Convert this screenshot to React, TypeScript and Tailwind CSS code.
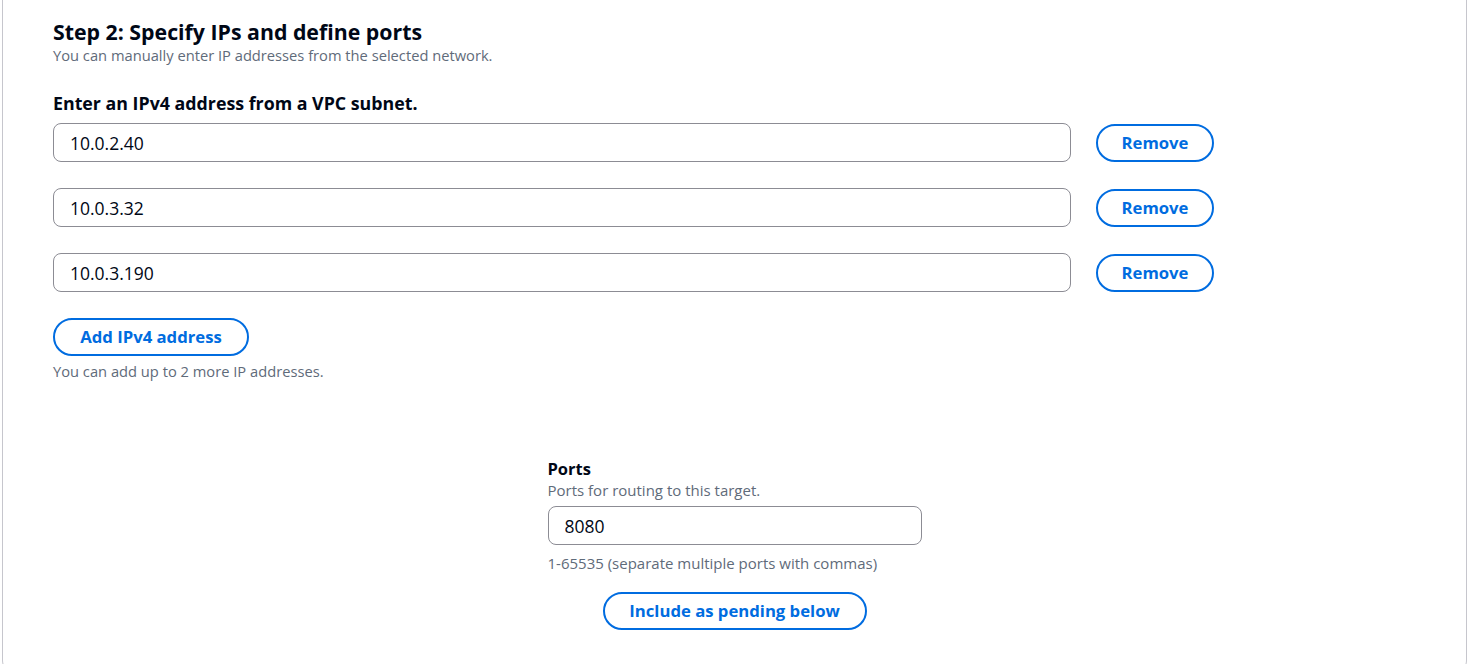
import { useState } from "react";

const FONT = { fontFamily: '"Open Sans", "Noto Sans", Arial, sans-serif' };

const PillButton = ({ label, className = "" }: { label: string; className?: string }) => (
  <button
    type="button"
    className={`h-[38px] rounded-full border-2 border-[#006ce0] bg-white text-[16.7px] font-bold text-[#006ce0] ${className}`}
  >
    {label}
  </button>
);

const TextInput = ({ value, className = "" }: { value: string; className?: string }) => {
  const [v, setV] = useState(value);
  return (
    <input
      value={v}
      onChange={(e) => setV(e.target.value)}
      className={`h-[39px] rounded-[8px] border border-[#8c8c94] bg-white px-[16px] text-[17.5px] text-[#000716] outline-none ${className}`}
    />
  );
};

export default function App() {
  const ips = ["10.0.2.40", "10.0.3.32", "10.0.3.190"];

  return (
    <div className="h-[664px] overflow-hidden bg-white" style={FONT}>
      <div className="mx-[2px] h-[676px] rounded-b-[16px] border-x border-b border-[#c6c6cd] pl-[50px] pr-[50px] pt-[18px]">
        <h2 className="text-[21.3px] font-bold leading-[27px] text-[#000716]">
          Step 2: Specify IPs and define ports
        </h2>
        <p className="text-[14.7px] leading-[20px] text-[#5f6b7a]">
          You can manually enter IP addresses from the selected network.
        </p>

        <div className="mt-[26px] text-[17.8px] font-bold leading-[24px] text-[#000716]">
          Enter an IPv4 address from a VPC subnet.
        </div>

        <div className="mt-[8px] flex flex-col gap-[26px]">
          {ips.map((ip) => (
            <div key={ip} className="flex items-center gap-[25px]">
              <TextInput value={ip} className="w-[1018px]" />
              <PillButton label="Remove" className="w-[118px]" />
            </div>
          ))}
        </div>

        <PillButton label="Add IPv4 address" className="mt-[26px] w-[196px]" />
        <p className="mt-[5px] text-[14.7px] leading-[20px] text-[#5f6b7a]">
          You can add up to 2 more IP addresses.
        </p>

        <div className="mx-auto mt-[77px] flex w-[374px] flex-col">
          <div className="text-[16.5px] font-bold leading-[22px] text-[#000716]">Ports</div>
          <p className="text-[15px] leading-[20px] text-[#5f6b7a]">
            Ports for routing to this target.
          </p>
          <TextInput value="8080" className="mt-[6px] w-full" />
          <p className="mt-[8px] text-[15px] leading-[20px] text-[#5f6b7a]">
            1-65535 (separate multiple ports with commas)
          </p>
          <PillButton label="Include as pending below" className="mx-auto mt-[19px] w-[264px]" />
        </div>
      </div>
    </div>
  );
}
